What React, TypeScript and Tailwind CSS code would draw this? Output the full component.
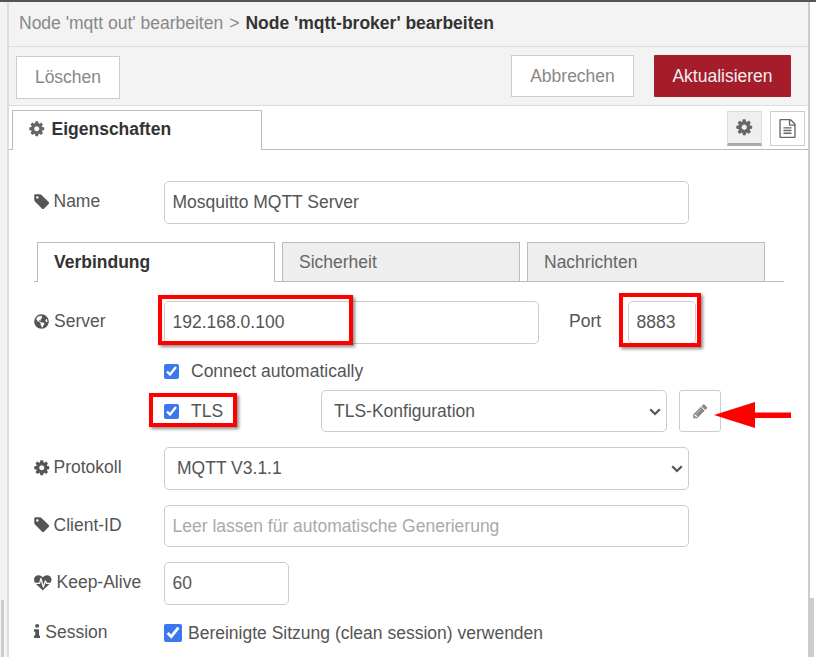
import { ReactNode } from "react"
import { FaGlobeAmericas } from "react-icons/fa"

const COG =
  "M1152 896q0-106-75-181t-181-75-181 75-75 181 75 181 181 75 181-75 75-181zm512-109v222q0 12-8 23t-20 13l-185 28q-19 54-39 91 35 50 107 138 10 12 10 25t-9 23q-27 37-99 108t-94 71q-12 0-26-9l-138-108q-44 23-91 38-16 136-29 186-7 28-36 28h-222q-14 0-24.5-8.5t-11.5-21.5l-28-184q-49-16-90-37l-141 107q-10 9-25 9-14 0-25-11-126-114-165-168-7-10-7-23 0-12 8-23 15-21 51-66.5t54-70.5q-27-50-41-99l-183-27q-13-2-21-12.5t-8-23.5v-222q0-12 8-23t19-13l186-28q14-46 39-92-40-57-107-138-10-12-10-24 0-10 9-23 26-36 98.5-107.5t94.5-71.5q13 0 26 10l138 107q44-23 91-38 16-136 29-186 7-28 36-28h222q14 0 24.5 8.5t11.5 21.5l28 184q49 16 90 37l142-107q9-9 24-9 13 0 25 10 129 119 165 170 7 8 7 22 0 12-8 23-15 21-51 66.5t-54 70.5q26 50 41 98l183 28q13 2 21 12.5t8 23.5z"
const TAG =
  "M576 448q0-53-37.5-90.5t-90.5-37.5-90.5 37.5-37.5 90.5 37.5 90.5 90.5 37.5 90.5-37.5 37.5-90.5zm1067 576q0 53-37 90l-491 492q-39 37-91 37-53 0-90-37l-715-716q-38-37-64.5-101t-26.5-117v-416q0-52 38-90t90-38h416q53 0 117 26.5t102 64.5l715 714q37 39 37 91z"
const INFO =
  "M1216 1344v128q0 26-19 45t-45 19h-512q-26 0-45-19t-19-45v-128q0-26 19-45t45-19h64v-384h-64q-26 0-45-19t-19-45v-128q0-26 19-45t45-19h384q26 0 45 19t19 45v576h64q26 0 45 19t19 45zm-128-1152v192q0 26-19 45t-45 19h-256q-26 0-45-19t-19-45v-192q0-26 19-45t45-19h256q26 0 45 19t19 45z"
const PENCIL =
  "M491 1536l91-91-235-235-91 91v107h128v128h107zm523-928q0-22-22-22-10 0-17 7l-542 542q-7 7-7 17 0 22 22 22 10 0 17-7l542-542q7-7 7-17zm-54-192l416 416-832 832h-416v-416zm683 96q0 53-37 90l-166 166-416-416 166-165q36-38 90-38 53 0 91 38l235 234q37 39 37 91z"
const FILE_TEXT =
  "M1596 380q28 28 48 76t20 88v1152q0 40-28 68t-68 28h-1344q-40 0-68-28t-28-68v-1600q0-40 28-68t68-28h896q40 0 88 20t76 48zm-444-244v376h376q-10-29-22-41l-313-313q-12-12-41-22zm384 1528v-1024h-416q-40 0-68-28t-28-68v-416h-768v1536h1280zm-1024-864q0-14 9-23t23-9h704q14 0 23 9t9 23v64q0 14-9 23t-23 9h-704q-14 0-23-9t-9-23v-64zm736 224q14 0 23 9t9 23v64q0 14-9 23t-23 9h-704q-14 0-23-9t-9-23v-64q0-14 9-23t23-9h704zm0 256q14 0 23 9t9 23v64q0 14-9 23t-23 9h-704q-14 0-23-9t-9-23v-64q0-14 9-23t23-9h704z"
const HEARTBEAT =
  "M1280 1024h305q-5 6-10 10.5t-9 7.5l-3 4-623 600q-18 18-44 18t-44-18l-624-602q-5-2-21-20h369q22 0 39.5-13.5t22.5-34.5l70-281 190 667q6 20 23 33t39 13q21 0 38-13t23-33l146-485 56 112q18 35 57 35zm512-428q0 145-103 300h-367l-111-221q-8-17-25.5-27t-36.5-8q-45 5-56 46l-129 430-196-686q-6-20-23.5-33t-39.5-13-39 13.5-22 34.5l-116 464h-423q-103-155-103-300 0-220 127-344t351-124q62 0 126.5 21.5t120 58 95.5 68.5 76 68q36-36 76-68t95.5-68.5 120-58 126.5-21.5q224 0 351 124t127 344z"

const Fa = ({ d, size = 17.5, box = "0 0 1792 1792", width }: { d: string; size?: number; box?: string; width?: number }) => (
  <svg width={width ?? size} height={size} viewBox={box} fill="currentColor" className="shrink-0">
    <path d={d} />
  </svg>
)

const inputCls =
  "h-full rounded-[5px] border border-[#ccc] bg-white px-[7.5px] text-[17.5px] text-[#555] outline-none placeholder:text-[#aaa]"

const Label = ({ icon, gap, children }: { icon: ReactNode; gap: string; children: ReactNode }) => (
  <label className={`flex w-[130px] shrink-0 items-center pb-[2px] text-[17.5px] text-[#555] ${gap}`}>
    {icon}
    {children}
  </label>
)

const Select = ({ width, children }: { width: string; children: ReactNode }) => (
  <div className={`relative h-full ${width}`}>
    <select className="h-full w-full appearance-none rounded-[5px] border border-[#ccc] bg-white pl-[12px] pr-6 text-[17.5px] text-[#555] outline-none">
      {children}
    </select>
    <svg className="absolute right-[6px] top-[18px]" width="12" height="8" viewBox="0 0 12 8" fill="none">
      <path d="M1.2 1.2 L6 6 L10.8 1.2" stroke="#555" strokeWidth="2.2" />
    </svg>
  </div>
)

const Mark = ({ className }: { className: string }) => (
  <div className={`absolute border-[4px] border-[#f00] shadow-[2px_2px_3px_rgba(0,0,0,0.45)] ${className}`} />
)

export default function App() {
  return (
    <div className="relative flex h-[657px] w-[816px] overflow-hidden border-t-2 border-[#555] bg-white font-['Liberation_Sans',Arial,sans-serif]">
      <div className="relative w-[7px] shrink-0 bg-[#f3f3f3]">
        <div className="absolute bottom-0 left-[1px] h-[57px] w-[3px] bg-[#ccc]" />
      </div>
      <div className="flex w-[803px] shrink-0 flex-col border-x-2 border-[#ccc] border-l-[#ddd]">
        <div className="flex h-[45px] shrink-0 items-center gap-[6px] border-b border-[#ddd] bg-[#f3f3f3] pb-[2px] pl-[10px] text-[17.5px] text-[#888]">
          <span>Node 'mqtt out' bearbeiten</span>
          <span>&gt;</span>
          <span className="font-bold text-[#333]">Node 'mqtt-broker' bearbeiten</span>
        </div>

        <div className="flex h-[59px] shrink-0 items-center justify-between border-b border-[#ddd] bg-[#f3f3f3] pl-[7px] pr-[17px]">
          <button className="mt-[2px] h-[43px] w-[104px] border border-[#ccc] bg-white text-[17.5px] text-[#888]">Löschen</button>
          <div className="flex gap-[20px]">
            <button className="h-[42px] w-[123px] border border-[#ccc] bg-white text-[17.5px] text-[#888]">Abbrechen</button>
            <button className="h-[42px] w-[137px] rounded-[1px] bg-[#a51d2a] text-[17.5px] text-[#eee]">Aktualisieren</button>
          </div>
        </div>

        <div className="flex h-[44px] shrink-0 items-end justify-between border-b border-[#bbb] pl-[3px] pr-[3px]">
          <div className="mb-[-1px] flex h-[40px] w-[250px] items-center gap-[6px] rounded-t-[1px] border border-b-0 border-[#bbb] bg-white pl-[15px] pb-[3px] text-[17.5px] font-bold text-[#333]">
            <span className="text-[#666]"><Fa d={COG} /></span>
            Eigenschaften
          </div>
          <div className="mb-[3px] flex gap-[8px]">
            <button className="flex h-[35px] w-[35px] items-center justify-center border border-[#ddd] border-b-[3px] border-b-[#aaa] bg-[#efefef] text-[#666]">
              <Fa d={COG} size={18.5} />
            </button>
            <button className="flex h-[35px] w-[35px] items-center justify-center border border-[#ccc] bg-white text-[#666]">
              <Fa d={FILE_TEXT} size={19} />
            </button>
          </div>
        </div>

        <div className="flex flex-col pl-[25px]">
          <div className="mt-[31px] flex h-[43px] items-center">
            <Label gap="gap-[3px] -ml-[1px]" icon={<Fa d={TAG} />}>Name</Label>
            <input className={`${inputCls} ml-[1px] w-[525px] pb-[1px]`} defaultValue="Mosquitto MQTT Server" readOnly />
          </div>

          <div className="mt-[18px] flex h-[40px] w-[750px] items-end gap-[7px] border-b border-[#bbb] pl-[3px]">
            <div className="mb-[-1px] flex h-[40px] w-[238px] items-center border border-b-0 border-[#bbb] bg-white pl-[16px] text-[17.5px] font-bold text-[#333]">Verbindung</div>
            <div className="flex h-[39px] w-[238px] items-center border border-b-0 border-[#bbb] bg-[#eee] pl-[16px] text-[17.5px] text-[#666]">Sicherheit</div>
            <div className="flex h-[39px] w-[238px] items-center border border-b-0 border-[#bbb] bg-[#eee] pl-[16px] text-[17.5px] text-[#666]">Nachrichten</div>
          </div>

          <div className="mt-[19px] flex h-[43px] items-center">
            <Label gap="gap-[5px]" icon={<FaGlobeAmericas size={15} />}>Server</Label>
            <input className={`${inputCls} w-[375px]`} defaultValue="192.168.0.100" readOnly />
            <span className="ml-[30px] w-[59px] pb-[2px] text-[17.5px] text-[#555]">Port</span>
            <input className={`${inputCls} w-[68px]`} defaultValue="8883" readOnly />
          </div>

          <div className="mt-[20px] flex h-[15px] items-center pl-[130px]">
            <input type="checkbox" defaultChecked readOnly className="m-0 h-[15px] w-[15px] accent-[#3b78f0]" />
            <span className="ml-[12px] pb-[1px] text-[17.5px] text-[#555]">Connect automatically</span>
          </div>

          <div className="mt-[11px] flex h-[42px] items-center">
            <div className="flex w-[287px] shrink-0 items-center pl-[130px]">
              <input type="checkbox" defaultChecked readOnly className="m-0 h-[15px] w-[15px] accent-[#3b78f0]" />
              <span className="ml-[12px] text-[17.5px] text-[#555]">TLS</span>
            </div>
            <Select width="w-[346px]">
              <option value="tls">TLS-Konfiguration</option>
            </Select>
            <button className="ml-[12px] flex h-full w-[42px] items-center justify-center rounded-[3px] border border-[#ccc] bg-white text-[#888]">
              <Fa d={PENCIL} size={16.5} />
            </button>
          </div>

          <div className="mt-[15px] flex h-[43px] items-center">
            <Label gap="gap-[3px] -ml-[1px]" icon={<Fa d={COG} />}>Protokoll</Label>
            <div className="ml-[1px] h-full">
              <Select width="w-[525px]">
                <option value="v311">MQTT V3.1.1</option>
              </Select>
            </div>
          </div>

          <div className="mt-[15px] flex h-[42px] items-center">
            <Label gap="gap-[3px] -ml-[1px]" icon={<Fa d={TAG} />}>Client-ID</Label>
            <input className={`${inputCls} ml-[1px] w-[525px]`} placeholder="Leer lassen für automatische Generierung" readOnly />
          </div>

          <div className="mt-[15px] flex h-[43px] items-center">
            <Label gap="gap-[5px]" icon={<Fa d={HEARTBEAT} />}>Keep-Alive</Label>
            <input className={`${inputCls} w-[125px]`} defaultValue="60" readOnly />
          </div>

          <div className="mt-[19px] flex h-[18px] items-center">
            <Label gap="gap-[5px]" icon={<Fa d={INFO} box="576 0 640 1792" width={6.25} />}>Session</Label>
            <input type="checkbox" defaultChecked readOnly className="m-0 h-[18px] w-[18px] accent-[#3b78f0]" />
            <span className="ml-[6px] text-[17.5px] text-[#555]">Bereinigte Sitzung (clean session) verwenden</span>
          </div>
        </div>
      </div>
      <div className="relative flex-1 bg-white">
        <div className="absolute bottom-0 left-0 h-[59px] w-[4px] bg-[#ccc]" />
      </div>

      <Mark className="left-[158px] top-[293px] h-[50px] w-[195px]" />
      <Mark className="left-[619px] top-[291px] h-[54px] w-[82px]" />
      <Mark className="left-[149px] top-[391px] h-[34px] w-[88px]" />

      <svg className="absolute left-[712px] top-[398px]" width="82" height="30" viewBox="0 0 82 30">
        <path d="M2 15 L43 2 L43 12.5 L79 12.5 L79 18 L43 18 L43 28 Z" fill="#f00" />
      </svg>
    </div>
  )
}
